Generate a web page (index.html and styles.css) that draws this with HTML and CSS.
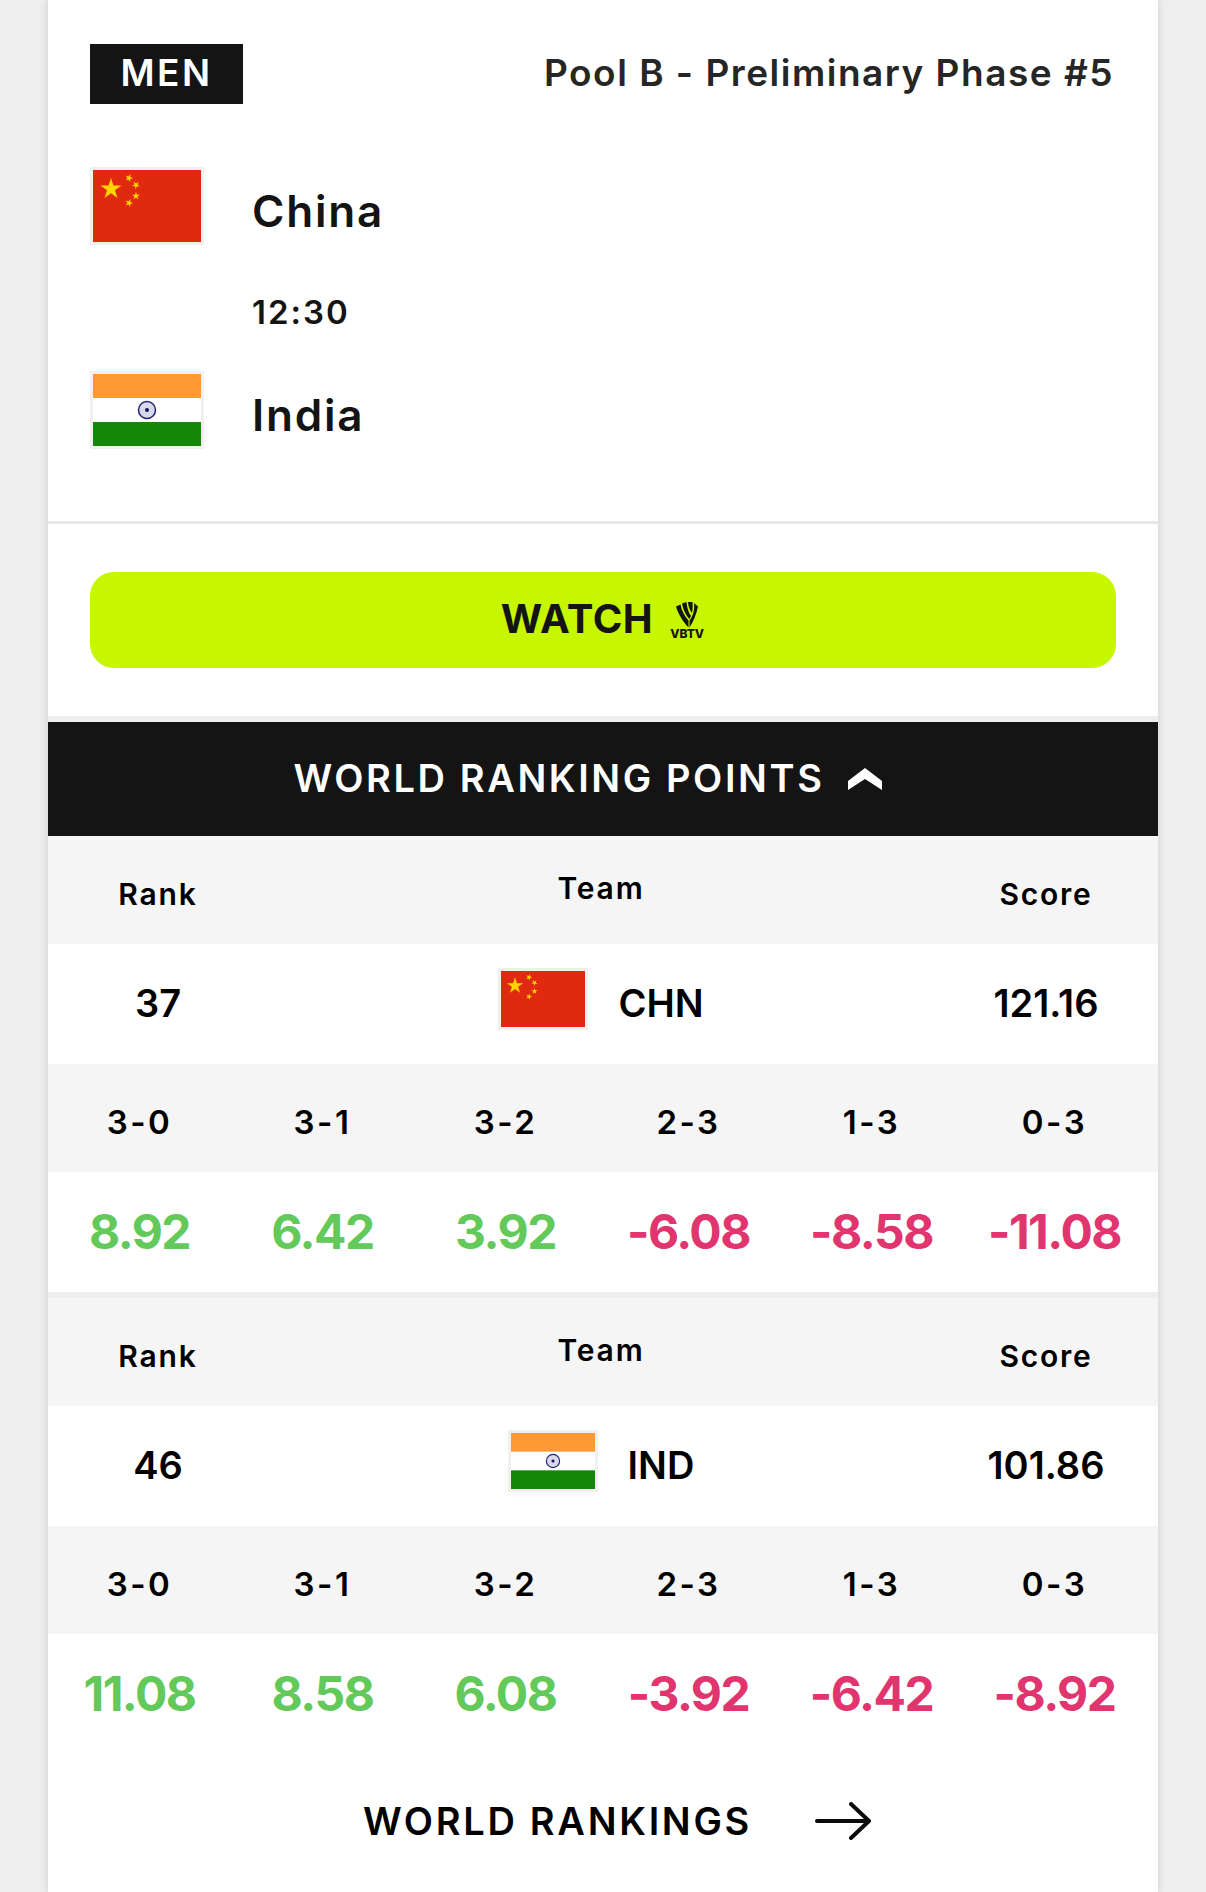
FILE: index.html
```html
<!DOCTYPE html>
<html lang="en">
<head>
    <meta charset="UTF-8">
    <meta name="viewport" content="width=device-width, initial-scale=1.0">
    <title>China - India</title>
    <link rel="stylesheet" href="styles.css">
</head>
<body>
    <svg class="defs" width="0" height="0">
        <defs>
            <polygon id="star" points="0,-1 .225,-.309 .951,-.309 .363,.118 .588,.809 0,.382 -.588,.809 -.363,.118 -.951,-.309 -.225,-.309" fill="#ffd400"/>
            <symbol id="flag-chn" viewBox="0 0 108 72">
                <rect width="108" height="72" fill="#e02a10"/>
                <use href="#star" transform="translate(18 19) scale(11)"/>
                <use href="#star" transform="translate(36 8) rotate(20) scale(4.2)"/>
                <use href="#star" transform="translate(43 15) rotate(40) scale(4.2)"/>
                <use href="#star" transform="translate(43 26) scale(4.2)"/>
                <use href="#star" transform="translate(36 33) rotate(20) scale(4.2)"/>
            </symbol>
            <symbol id="flag-ind" viewBox="0 0 108 72">
                <rect width="108" height="72" fill="#fff"/>
                <rect width="108" height="24" fill="#ff9933"/>
                <rect y="48" width="108" height="24" fill="#138808"/>
                <circle cx="54" cy="36" r="8.5" fill="#d8d8ec" stroke="#23236e" stroke-width="1.5"/>
                <circle cx="54" cy="36" r="2" fill="#14145a"/>
            </symbol>
        </defs>
    </svg>

    <div class="card">
        <section class="match">
            <div class="match-top">
                <span class="badge">MEN</span>
                <span class="pool">Pool B - Preliminary Phase #5</span>
            </div>
            <div class="team">
                <svg class="flag flag-big"><use href="#flag-chn"/></svg>
                <span class="team-name">China</span>
            </div>
            <div class="time">12:30</div>
            <div class="team">
                <svg class="flag flag-big"><use href="#flag-ind"/></svg>
                <span class="team-name">India</span>
            </div>
        </section>

        <section class="watch-wrap">
            <a class="watch" href="#">
                <span class="watch-label">WATCH</span>
                <span class="vbtv">
                    <svg class="vbtv-mark" viewBox="0 0 22 26">
                        <path d="M0 4.500 4.500 2.500C5.500 8.500 8.500 14 12.500 18.500V25.500C7 19.500 2 12 0 4.500z" fill="#141414"/>
                        <path d="M6 1.500 10.500 0C11 6 12.500 10.500 15 14L13.200 17C9.500 12.500 7 7.500 6 1.500z" fill="#141414"/>
                        <path d="M12 0H16.500C16.700 3.500 16.800 6.500 16 11 13.500 8 12.300 4 12 0z" fill="#141414"/>
                        <path d="M18 1 22 4.500C20.500 12 17.500 19.500 13.500 25.500V18.500C17 14 19 7.500 18 1z" fill="#141414"/>
                    </svg>
                    <span class="vbtv-text">VBTV</span>
                </span>
            </a>
        </section>

        <div class="wrp-bar">
            <span class="wrp-label">WORLD RANKING POINTS</span>
            <svg class="chevron" viewBox="0 0 34 22"><path d="M0 13 17 0 34 13V22L17 11 0 22z" fill="#fff"/></svg>
        </div>

        <section class="points">
            <div class="row-3 row-head">
                <span>Rank</span>
                <span class="head-team">Team</span>
                <span>Score</span>
            </div>
            <div class="row-3 row-main">
                <span>37</span>
                <span class="code">
                    <svg class="flag flag-small"><use href="#flag-chn"/></svg>
                    CHN
                </span>
                <span>121.16</span>
            </div>
            <div class="row-6 row-head row-sets">
                <span>3-0</span><span>3-1</span><span>3-2</span><span>2-3</span><span>1-3</span><span>0-3</span>
            </div>
            <div class="row-6 row-values">
                <span class="up">8.92</span><span class="up">6.42</span><span class="up">3.92</span>
                <span class="down">-6.08</span><span class="down">-8.58</span><span class="down">-11.08</span>
            </div>
        </section>

        <section class="points">
            <div class="row-3 row-head">
                <span>Rank</span>
                <span class="head-team">Team</span>
                <span>Score</span>
            </div>
            <div class="row-3 row-main">
                <span>46</span>
                <span class="code">
                    <svg class="flag flag-small"><use href="#flag-ind"/></svg>
                    IND
                </span>
                <span>101.86</span>
            </div>
            <div class="row-6 row-head row-sets">
                <span>3-0</span><span>3-1</span><span>3-2</span><span>2-3</span><span>1-3</span><span>0-3</span>
            </div>
            <div class="row-6 row-values">
                <span class="up">11.08</span><span class="up">8.58</span><span class="up">6.08</span>
                <span class="down">-3.92</span><span class="down">-6.42</span><span class="down">-8.92</span>
            </div>
        </section>

        <a class="rankings" href="#">
            <span>WORLD RANKINGS</span>
            <svg class="arrow" viewBox="0 0 56 38">
                <path d="M2 19H53M36 2 54 19 36 36" fill="none" stroke="#0a0a0a" stroke-width="4" stroke-linecap="round" stroke-linejoin="round"/>
            </svg>
        </a>
    </div>
</body>
</html>
```

FILE: styles.css
```css
* {
    box-sizing: border-box;
}

body {
    margin: 0;
    background-color: #eeeeee;
    color: #141414;
    font-family: "Inter", "Liberation Sans", sans-serif;
}

a {
    color: inherit;
    text-decoration: none;
}

.defs {
    display: block;
    height: 0;
}

.card {
    width: 1110px;
    min-height: 1892px;
    margin-left: 48px;
    background-color: #fff;
    box-shadow: 0 0 8px rgba(0, 0, 0, 0.14);
}

.flag {
    display: block;
    flex: none;
    padding: 3px;
    background-color: #f3efee;
}

.flag-big {
    width: 114px;
    height: 78px;
}

.flag-small {
    width: 90px;
    height: 62px;
    margin-bottom: 8px;
}

/* match header */
.match {
    height: 524px;
    padding: 44px 42px 0;
    border-bottom: 3px solid #e8e8e8;
}

.match-top {
    display: flex;
    justify-content: space-between;
    align-items: center;
    margin-bottom: 63px;
}

.badge {
    width: 153px;
    height: 60px;
    padding-bottom: 2px;
    background-color: #141414;
    color: #fff;
    font-size: 37px;
    font-weight: 600;
    line-height: 58px;
    letter-spacing: 2.5px;
    text-align: center;
}

.pool {
    margin-right: 2px;
    padding-bottom: 4px;
    color: #262626;
    font-size: 37px;
    font-weight: 600;
    letter-spacing: 1.5px;
}

.team {
    display: flex;
    align-items: center;
    gap: 48px;
}

.team-name {
    padding-top: 10px;
    font-size: 44px;
    font-weight: 600;
    letter-spacing: 1.8px;
}

.time {
    height: 48px;
    margin: 43px 0 35px 162px;
    font-size: 33px;
    font-weight: 600;
    line-height: 48px;
    letter-spacing: 2px;
}

/* watch button */
.watch-wrap {
    height: 198px;
    padding: 48px 42px 0;
    border-bottom: 6px solid #eeeeee;
}

.watch {
    display: flex;
    justify-content: center;
    align-items: center;
    gap: 16px;
    height: 96px;
    border-radius: 24px;
    background-color: #c6f600;
    font-size: 40px;
    font-weight: 700;
    letter-spacing: 0.5px;
}

.watch-label {
    padding-bottom: 3px;
}

.vbtv {
    display: flex;
    flex-direction: column;
    align-items: center;
    width: 36px;
    letter-spacing: 0;
}

.vbtv-mark {
    width: 22px;
    height: 26px;
}

.vbtv-text {
    font-size: 12px;
    font-weight: 800;
    line-height: 11px;
}

/* ranking points */
.wrp-bar {
    display: flex;
    justify-content: center;
    align-items: center;
    gap: 24px;
    height: 114px;
    padding-right: 30px;
    background-color: #141414;
    color: #fff;
    font-size: 38px;
    font-weight: 600;
    letter-spacing: 2.6px;
}

.wrp-label {
    padding-bottom: 3px;
}

.chevron {
    width: 34px;
    height: 22px;
}

.points {
    border-bottom: 6px solid #eeeeee;
}

.points:last-of-type {
    border-bottom: 0;
}

.row-3,
.row-6 {
    display: grid;
    align-items: center;
    justify-items: center;
}

.row-3 {
    grid-template-columns: 220px 666px 224px;
}

.row-6 {
    grid-template-columns: repeat(6, 183px);
}

.row-head {
    height: 108px;
    padding-top: 7px;
    background-color: #f5f5f5;
    color: #000;
    font-size: 30px;
    font-weight: 600;
    letter-spacing: 1.8px;
}

.row-sets {
    font-size: 33px;
    letter-spacing: 2.5px;
}

.head-team {
    padding-bottom: 12px;
}

.row-main {
    height: 120px;
    padding-bottom: 2px;
    color: #000;
    font-size: 38px;
    font-weight: 600;
}

.code {
    display: flex;
    align-items: center;
    gap: 30px;
}

.row-values {
    height: 120px;
    padding-right: 2px;
    padding-bottom: 2px;
    font-size: 48px;
    font-weight: 700;
    letter-spacing: -1.5px;
}

.up {
    color: #62c95a;
}

.down {
    color: #e0356e;
}

.rankings {
    display: flex;
    justify-content: center;
    align-items: center;
    gap: 63px;
    height: 134px;
    padding-left: 28px;
    color: #000;
    font-size: 38px;
    font-weight: 600;
    letter-spacing: 2.7px;
}

.arrow {
    width: 56px;
    height: 38px;
}
```
